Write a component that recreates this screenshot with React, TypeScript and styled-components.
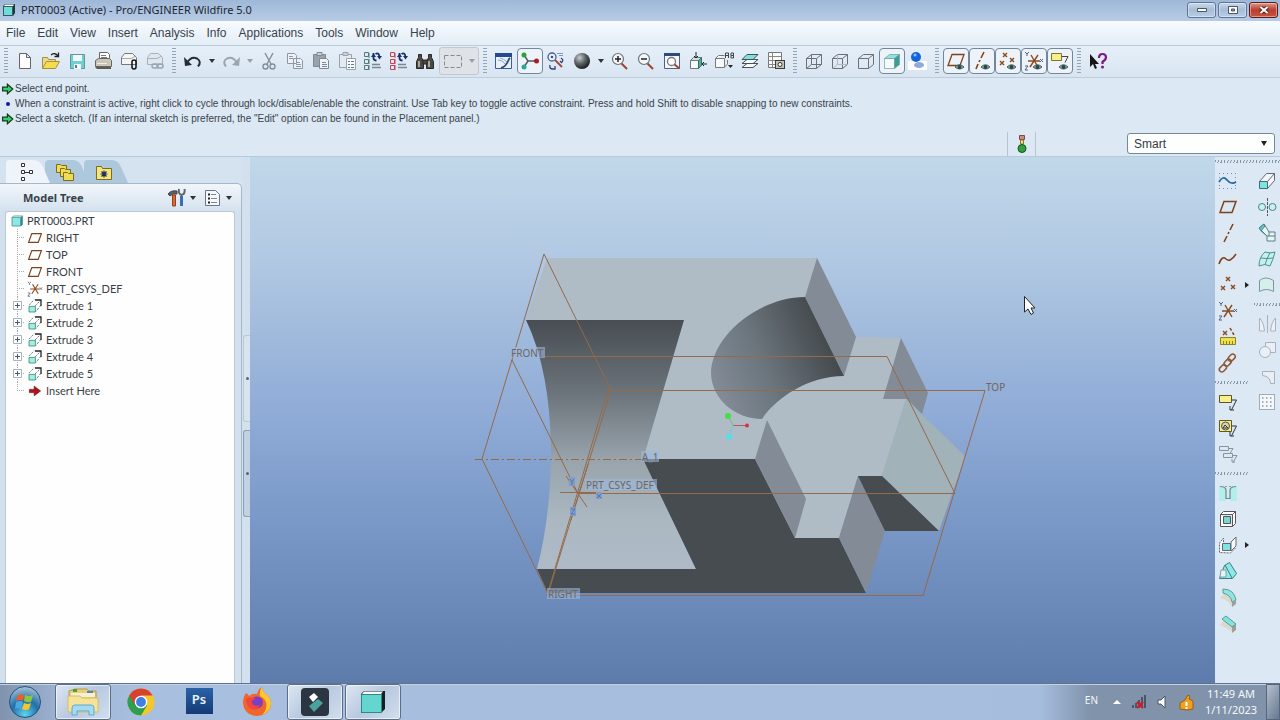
import React, { ReactNode } from 'react';
import styled, { createGlobalStyle } from 'styled-components';

const ui = "'Noto Sans', 'Open Sans', sans-serif";
const arial = "'Liberation Sans', Arial, sans-serif";

const Global = createGlobalStyle`
  * { box-sizing: border-box; }
  body { margin: 0; background: #dce8f3; }
  button { margin: 0; padding: 0; border: 0; background: none; font: inherit; color: inherit; }
  svg { display: block; }
  ul { list-style: none; margin: 0; padding: 0; }
`;

/* ---------- icon artwork, all on a 20 x 20 grid ---------- */

const thin = { fill: 'none', strokeWidth: 1 };
const eye = (
  <g>
    <path d="M9 16q4.500-4.500 9 0q-4.500 4-9 0z" fill="#9fb0b4" stroke="#4a5a5e" />
    <circle cx="13.500" cy="16" r="2" fill="#1d4a4a" />
  </g>
);
const lens = (
  <g>
    <path d="M11 12l6 6" stroke="#a04030" strokeWidth="2" />
    <circle cx="8" cy="8" r="5.500" fill="#f4f6f8" stroke="#6b747c" strokeWidth="1.200" />
  </g>
);
const regen = (box: string) => (
  <g>
    <g fill="#dfe9ee" stroke={box}>
      <path d="M1.500 1.500h4v4h-4zM1.500 8.500h4v4h-4zM1.500 14.500h4v4h-4z" />
    </g>
    <path d="M6 14v5M6 2v5M6 8v5" stroke={box} />
    <path d="M10.500 2v5q0 2.500 3 2.500" stroke="#17306e" strokeWidth="1.800" fill="none" />
    <path d="M8 6l2.500-3.500L13 6z" fill="#17306e" />
    <path d="M12.500 3q3.500-2 4 3" stroke="#17306e" strokeWidth="1.800" fill="none" />
    <path d="M14 5h5l-2.500 3.500z" fill="#17306e" />
    <path d="M9 13.500h8M9 16.500h9" stroke="#7a8794" strokeWidth="1.300" />
  </g>
);
const cubeLines = <path d="M2.500 7.500h10v10h-10zM2.500 7.500l5-4h10l-5 4M17.500 3.500v10l-5 4" stroke="#6c7078" {...thin} />;
const cross = (x: number, y: number) => <path d={`M${x - 2} ${y - 2}l4 4M${x + 2} ${y - 2}l-4 4`} stroke="#8a4a20" strokeWidth="1.400" />;
const csys = (
  <g stroke="#8a4a20" strokeWidth="1.400" fill="none">
    <path d="M4 10h12M7 4l7 12M14 4L6 16" />
    <path d="M1 1l2 2 2-2M3 3v2M1 15h3l-3 4h3M16 8l3 3M19 8l-3 3" stroke="#53617e" strokeWidth="1" />
  </g>
);
const plane = <path d="M6 4.500h12l-4 11h-12z" stroke="#7d4420" strokeWidth="1.500" fill="none" />;

const art: Record<string, ReactNode> = {
  new: <path d="M4.500 2.500h7l4 4v11h-11zM11.500 2.500v4h4" fill="#fdfdfd" stroke="#666" />,
  open: (
    <g>
      <path d="M1.500 17.500v-11h5l1 2h7v3" fill="#e9d98c" stroke="#a8903a" />
      <path d="M1.500 17.500l4-7h13l-4 7z" fill="#f6dc50" stroke="#a8903a" />
      <path d="M10 4q4-3 7 1M17.500 1.500v4h-4" fill="none" stroke="#222" strokeWidth="1.300" />
    </g>
  ),
  save: (
    <g>
      <path d="M3.500 3.500h14v14h-14z" fill="#6fd0cd" stroke="#5a9a9e" />
      <path d="M6 4h9v6H6zM7 13h7v5H7z" fill="#f2f8fa" />
      <path d="M8 14h2v3H8z" fill="#44868c" />
    </g>
  ),
  print: (
    <g>
      <path d="M6.500 9V1.500h8l2 2V9" fill="#fff" stroke="#666" />
      <path d="M8 4.500h5M8 6.500h6" stroke="#777" />
      <path d="M2.500 9.500l3-2h11l2 2v6h-16z" fill="#c9c5bb" stroke="#6b675f" />
      <path d="M2 16h16v2H4z" fill="#5d5953" />
      <path d="M4 12.500h10" stroke="#f5f0da" />
    </g>
  ),
  mail: (
    <g>
      <path d="M2.500 13.500v-7l3-4h8l4 4v7z" fill="#f5f5f5" stroke="#777" />
      <path d="M3 7.500h9l4-2" stroke="#aaa" {...thin} />
      <rect x="13" y="9" width="4" height="9" rx="2" fill="none" stroke="#111" strokeWidth="1.500" />
    </g>
  ),
  mailLink: (
    <g opacity=".7">
      <path d="M2.500 13.500v-7l3-4h8l4 4v7z" fill="#dfe6ec" stroke="#8d98a4" />
      <path d="M3 7.500h9l4-2" stroke="#8d98a4" {...thin} />
      <rect x="7" y="13" width="6" height="4" rx="2" fill="none" stroke="#7d8894" strokeWidth="1.500" />
      <rect x="12" y="13" width="6" height="4" rx="2" fill="none" stroke="#7d8894" strokeWidth="1.500" />
    </g>
  ),
  undo: <g><path d="M4 12q4-7 10-4.500q5 3 1 8" fill="none" stroke="#252c38" strokeWidth="2" /><path d="M1 6l1 9 7-1z" fill="#252c38" /></g>,
  redo: <g><path d="M16 12q-4-7-10-4.500q-5 3-1 8" fill="none" stroke="#9aa5b1" strokeWidth="2" /><path d="M19 6l-1 9-7-1z" fill="#9aa5b1" /></g>,
  cut: <g stroke="#848f9b" fill="none" strokeWidth="1.400"><path d="M6 2l6 11M14 2L8 13" /><circle cx="6.500" cy="15.500" r="2.500" /><circle cx="13.500" cy="15.500" r="2.500" /></g>,
  copy: <g fill="#eef2f6" stroke="#8d98a4"><path d="M2.500 2.500h7l2 2v8h-9zM8.500 7.500h7l2 2v8h-9z" /><path d="M4 5.500h4M4 7.500h4M11 11.500h4M11 13.500h5M11 15.500h5" /></g>,
  paste: <g stroke="#7e8995"><path d="M2.500 3.500h12v12h-12z" fill="#98a2ad" /><path d="M6 1.500h5v3H6z" fill="#c9d0d6" /><path d="M8.500 7.500h7l2 2v8h-9z" fill="#eef2f6" /><path d="M11 11.500h4M11 13.500h5M11 15.500h5" /></g>,
  pasteSpecial: <g stroke="#98a3ae"><path d="M2.500 3.500h12v13h-12z" fill="#e4eaf0" /><path d="M6 1.500h5v3H6z" fill="#c9d0d6" /><path d="M9.500 7.500h9v11h-9z" fill="#f7f9fb" /><path d="M11 10.500h2M14 10.500h3M11 13.500h2M14 13.500h3M11 16.500h2M14 16.500h3" stroke="#5f7895" /></g>,
  regen: regen('#4f7c80'),
  regenRed: regen('#c04455'),
  find: (
    <g fill="#4c4a44" stroke="#2b2925">
      <path d="M1.500 17.500v-7l2-4v-3h3v3l2 4v7zM18.500 17.500v-7l-2-4v-3h-3v3l-2 4v7z" />
      <path d="M8 9h4v4H8z" />
      <path d="M4 10v6M14 10v6" stroke="#c8c4b8" strokeWidth="1.500" />
    </g>
  ),
  dashed: <path d="M1.500 4.500h17v12h-17z" fill="none" stroke="#8a8a8a" strokeDasharray="4 2" />,
  repaint: <g><path d="M1.500 2.500h16v15h-16z" fill="#e8f1fb" stroke="#3b5f98" /><path d="M1 2h17v4H1z" fill="#234a90" /><path d="M7 17q5-1 8-9l1-1" stroke="#33486c" fill="none" strokeWidth="1.800" /><path d="M4 9q5 0 7 4M6 7q4 1 7 4" stroke="#8aa6cc" fill="none" /></g>,
  spin: <g><path d="M4 4l4 6h9M8 10l-4 6" stroke="#556" fill="none" strokeWidth="1.500" /><circle cx="4" cy="4" r="2.500" fill="#2fa036" /><circle cx="4" cy="16" r="2.500" fill="#26a89a" /><circle cx="16.500" cy="10" r="2.500" fill="#b01825" /></g>,
  orient: (
    <g>
      <path d="M9 9l7 7" stroke="#a5433c" strokeWidth="1.800" />
      <circle cx="6" cy="6" r="4" fill="#eef3fa" stroke="#4a5f90" strokeWidth="1.300" />
      <circle cx="6" cy="6" r="1.300" fill="#34508c" />
      <path d="M11 2.500h6M13 4.500h4" stroke="#7f99c4" />
      <path d="M15 7q3 2 1 4M14 10l2 2M4 14q-1 4 3 4M9 15v3h-3" stroke="#2d4274" fill="none" strokeWidth="1.300" />
    </g>
  ),
  shade: <circle cx="10" cy="10" r="8" fill="url(#ball)" />,
  zoomIn: <g>{lens}<path d="M5 8h6M8 5v6" stroke="#222" strokeWidth="1.500" /></g>,
  zoomOut: <g>{lens}<path d="M5 8h6" stroke="#222" strokeWidth="1.500" /></g>,
  fit: <g><path d="M2.500 2.500h15v15h-15z" fill="#f2f5f9" stroke="#4d6288" /><path d="M2 2h16v3H2z" fill="#2a4a80" /><circle cx="9.500" cy="10.500" r="4" fill="#fff" stroke="#777" strokeWidth="1.300" /><path d="M12.500 13.500l5 4" stroke="#a04030" strokeWidth="2" /></g>,
  reorient: <g><path d="M2.500 9.500h8v8h-8z" fill="#f8fbfc" stroke="#777" /><path d="M2.500 9.500l3-3h8l-3 3z" fill="#bfeadf" stroke="#777" /><path d="M10.500 17.500l3-3v-8l-3 3z" fill="#4fae9c" stroke="#3c6c64" /><path d="M8 1v6M6 5l2 2 2-2M19 13h-5M16 11l-2 2 2 2" stroke="#222" fill="none" /></g>,
  views: (
    <g>
      <path d="M1.500 7.500h9v9h-9zM1.500 7.500l3-3h6M13.500 9v4l-3 3" fill="#f8fbfc" stroke="#777" />
      <path d="M11.500 7V2h3v5M12 4.500h3M17 2h2.500v5H17zM17 4.500h2" stroke="#444" fill="none" />
      <path d="M14 14h5l-2.500 3z" fill="#222" />
    </g>
  ),
  layers: <g stroke="#425058"><path d="M2 16.500l5-4h11l-5 4zM2 12.500l5-4h11l-5 4z" fill="#fafcfd" /><path d="M2 8.500l5-5h11l-5 5z" fill="#7fe0de" /></g>,
  viewMgr: <g><path d="M2.500 1.500h13v15h-13z" fill="#fafaf8" stroke="#777" /><path d="M2 5.500h13M2 9.500h13M2 13.500h13M6.500 2v14" stroke="#888" /><rect x="9.500" y="9.500" width="9" height="8" fill="#c6c2b8" stroke="#3f3c36" /><circle cx="14" cy="13.500" r="2" fill="#fff" stroke="#333" /></g>,
  wire: <g>{cubeLines}<path d="M7.500 3.500v10h10M7.500 13.500l-5 4" stroke="#6c7078" {...thin} /></g>,
  hidden: <g>{cubeLines}<path d="M7.500 3.500v10h10M7.500 13.500l-5 4" stroke="#b2bac4" {...thin} /></g>,
  noHidden: cubeLines,
  shaded: <g stroke="#6f9fa2" strokeWidth=".7"><path d="M2.500 7.500h10v10h-10z" fill="#f3fbfb" /><path d="M2.500 7.500l5-4h10l-5 4z" fill="#8fe3df" /><path d="M17.500 3.500v10l-5 4v-10z" fill="#3f9a98" /></g>,
  enhanced: <g><path d="M0 10h19v9H0z" fill="#fbfdff" /><ellipse cx="11" cy="14" rx="5" ry="3" fill="#8fa9dc" /><circle cx="8" cy="6" r="5" fill="#1466d8" /><circle cx="7" cy="4" r="1.500" fill="#8cc0ff" /></g>,
  dPlane: <g><path d="M6 3.500h12l-4 11h-12z" stroke="#7d4420" strokeWidth="1.300" fill="none" />{eye}</g>,
  dAxis: <g><path d="M12 1l-3 6M8 9l-1 2M6 13l-2 5" stroke="#7d4420" strokeWidth="1.600" />{eye}</g>,
  dPoint: <g>{cross(7, 4)}{cross(4, 12)}{cross(14, 9)}{eye}</g>,
  dCsys: <g>{csys}{eye}</g>,
  dNote: <g><path d="M1.500 2.500h10v7h-10z" fill="#f7f08a" stroke="#7c7530" /><path d="M12 5.500h6l-3 6" fill="none" stroke="#444" />{eye}</g>,
  help: <g><path d="M2 3v13l3-3 2 5 2-1-2-4h4z" fill="#151515" /><path d="M11 7q0-4 3.500-4t3.500 3.500q0 2-3.500 4.500v2" fill="none" stroke="#7b1a80" strokeWidth="2.200" /><circle cx="14.500" cy="16" r="1.500" fill="#7b1a80" /></g>,

  sketch: <g><path d="M1 2.500h17M1 17.500h17M1.500 2v16M17.500 2v16" stroke="#6e8fc0" strokeDasharray="1 3" /><path d="M1 11q4-7 8-2t9 2" fill="none" stroke="#23689e" strokeWidth="1.800" /></g>,
  plane,
  axis: <path d="M15 1l-3 6M11 9l-1 2M9 13l-3 6" stroke="#7d4420" strokeWidth="1.600" />,
  curve: <path d="M1 15q3-9 7-5t10-5" fill="none" stroke="#7d4420" strokeWidth="1.600" />,
  points: <g>{cross(10, 4)}{cross(5, 13)}{cross(15, 12)}</g>,
  csys,
  analysis: <g>{cross(7, 6)}<path d="M12 1l4 7" stroke="#7d4420" strokeDasharray="3 2" strokeWidth="1.500" /><path d="M2.500 10.500h15v7h-15z" fill="#efe04e" stroke="#8d8224" /><path d="M5.500 14v3M8.500 14v3M11.500 14v3M14.500 14v3" stroke="#8d8224" /></g>,
  chain: <g fill="none" stroke="#8a5636" strokeWidth="1.500"><rect x="10" y="2" width="8" height="5" rx="2.500" transform="rotate(-45 14 5)" /><rect x="6" y="7" width="8" height="5" rx="2.500" transform="rotate(-45 10 10)" /><rect x="1" y="12" width="8" height="5" rx="2.500" transform="rotate(-45 6 15)" /></g>,
  note: <g><path d="M1.500 3.500h12v7h-12z" fill="#f7f08a" stroke="#5c5530" /><path d="M14 8h4.500l-5 10M12 14v4h4" fill="none" stroke="#333" /></g>,
  noteSketch: <g><path d="M1.500 2.500h12v11h-12z" fill="#f7f08a" stroke="#5c5530" /><circle cx="7.500" cy="8" r="4" fill="#ddd8a0" stroke="#555" /><path d="M5 10l2-3 3 3zM14 8h4.500l-5 10M12 14v4h4" fill="none" stroke="#333" /></g>,
  notes: <g fill="none" stroke="#8a949e"><path d="M1.500 2.500h9v4h-9zM5.500 9.500h9v4h-9z" /><path d="M11 4.500h4l-3 5M15 11.500h4l-4 7M14 15v3h3" /></g>,
  hole: <g><path d="M1 3h5l2 3v12H1zM19 3h-5l-2 3v12h7z" fill="#b4eeeb" /><path d="M2 3.500q6 0 6 4v8h4v-8q0-4 6-4" fill="none" stroke="#5f8c94" strokeWidth="1.200" /><path d="M3 3.500h14" stroke="#7f9fb0" strokeDasharray="2 2" /></g>,
  shell: <g fill="#fff" stroke="#5a5458"><path d="M2.500 5.500l3-3h12v12l-3 3h-12zM14.500 17.500v-12h-12M14.500 5.500l3-3" /><path d="M5.500 7.500h7v7h-7z" fill="#76d8d2" /></g>,
  rib: <g stroke="#667"><path d="M1.500 17.500V8l4-5v9h7l5-5v6l-5 5z" fill="#f8fbfc" strokeDasharray="2 1" /><path d="M4.500 8.500h8v7h-8z" fill="#7fe3df" /><path d="M13 16V7l5-5v9z" fill="#f8fbfc" /></g>,
  draft: <g stroke="#3f7c88"><path d="M1.500 17.500l5-13 5-3 7 11-4 5z" fill="#8de9e4" /><path d="M3 9h5v7H2z" fill="#e6f4f4" stroke="#7fa3a8" /><path d="M7 4l7 13" /></g>,
  round: <g><path d="M2 11l5-5q6 0 9 8v4l-3 1q-2-6-11-8z" fill="#dcd8cc" /><path d="M5 2q11 0 13 11l-4 2Q13 8 5 6z" fill="#8fe6e0" stroke="#5f9a9c" /><path d="M14 15l4-2v4l-4 3z" fill="#a39e94" /></g>,
  chamfer: <g><path d="M2 12l5-6 8 7v6l-5-3z" fill="#dcd8cc" /><path d="M14 12l4-1v6l-4 3z" fill="#a39e94" /><path d="M4 6l4-3 10 8-4 3z" fill="#7fe3df" stroke="#5f9a9c" /></g>,

  extrude: <g><path d="M2.500 10.500l7-8h8v7l-7 8z" fill="#f3f6f8" stroke="#667" /><path d="M2.500 10.500h8v7h-8z" fill="#7fe3df" stroke="#3f6e78" /><path d="M10.500 10.500l7-8" stroke="#667" /></g>,
  revolve: <g><path d="M10.500 1v18" stroke="#555" strokeDasharray="3 1" /><circle cx="5" cy="10" r="3.500" fill="#c7f2f0" stroke="#4c8490" /><circle cx="15.500" cy="10" r="3.500" fill="#c7f2f0" stroke="#4c8490" /></g>,
  sweep: <g stroke="#58808a"><path d="M2 5l5-4 5 8h6v9h-8v-5z" fill="#e6f5f4" /><path d="M2 5l5-4 1 2-4 5z" fill="#5cc9c4" /><path d="M4 8l6 5h8M12 9v4" fill="none" /></g>,
  blend: <g stroke="#4d8f92"><path d="M2 17q0-9 6-14q5 2 10 0q-2 8-5 14q-5-3-11 0z" fill="#c4f1ee" /><path d="M13 3.500q-3 6-5 12M4 9q6 1 12 0" fill="none" /></g>,
  style: <path d="M2.500 16.500v-11q6-5 14 0v11q-7-4-14 0z" fill="#d5efec" stroke="#7d979c" />,
  mirror: <g stroke="#a8b2bc" fill="#eef2f6"><path d="M2.500 4v13h5q-1-9-5-13zM18.500 4v13h-5q1-9 5-13z" /><path d="M10.500 1v18" /></g>,
  merge: <g stroke="#a8b2bc" fill="#e9eff4"><path d="M8.500 2.500h10v10h-10z" /><circle cx="8" cy="12" r="5.500" /></g>,
  trim: <path d="M5.500 5.500h12v12h-4q0-7-8-8z" stroke="#a8b2bc" fill="#e9eff4" />,
  pattern: <g><rect x="2.500" y="2.500" width="15" height="15" fill="#f4f8fb" stroke="#a0acb8" /><path d="M5 6h11M5 10h11M5 14h11" stroke="#8797a8" strokeDasharray="1.500 2.500" strokeWidth="1.500" /></g>,

  treeTab: <g fill="#fff" stroke="#333"><path d="M5.500 1.500h3v3h-3zM5.500 8.500h3v3h-3zM5.500 15.500h3v3h-3zM13.500 8.500h3v3h-3z" /><path d="M9 10.500h4" /></g>,
  folders: <g fill="#f1dc55" stroke="#7c6c1c"><path d="M1.500 2.500h4l1 1h5v7h-10z" /><path d="M5.500 6.500h4l1 1h5v7h-10z" /><path d="M8.500 10.500h4l1 1h5v7h-10z" /></g>,
  fav: <g><path d="M2.500 4.500h5l1 2h9v11h-15z" fill="#f4e67c" stroke="#7c6c1c" /><path d="M10 8.500v7M6.500 12h7M7.500 9.500l5 5M12.500 9.500l-5 5" stroke="#1c2a5c" strokeWidth="1.200" /></g>,
  tools: <g><path d="M1 6q3-4 9-3v3L6 6 3 8z" fill="#5c6267" stroke="#444" /><path d="M5.500 7h3v11h-3z" fill="#d96b35" stroke="#96411c" /><path d="M14.500 8v10" stroke="#3b6db5" strokeWidth="3" /><path d="M12 1q-1 5 2.500 6q4-1 3-6" fill="none" stroke="#5f666c" strokeWidth="2" /></g>,
  settings: <g><path d="M2.500 2.500h10l4 4v11h-14z" fill="#f6f8fb" stroke="#6a7686" /><path d="M5 6.500h2M5 10.500h2M5 14.500h2" stroke="#222" strokeWidth="2" /><path d="M8 6.500h5M8 10.500h6M8 14.500h6" stroke="#7a889a" /></g>,
  part: <g stroke="#3c8f92" strokeWidth=".8"><path d="M3 5l2-2h13v12l-2 2H3z" fill="#3d8488" /><path d="M3 5h12v12H3z" fill="#8be8e4" /><path d="M3 5l2-2h13l-3 2z" fill="#e2fbfa" /></g>,
  insert: <path d="M3 8h6V4l8 6-8 6v-4H3z" fill="#b41219" stroke="#5b0c10" strokeWidth=".8" />,
  extrudeFeat: <g><path d="M2.500 9L9 2M10 10l7-7M17.500 9L11 17" fill="none" stroke="#3f6c60" strokeDasharray="3 1.500" /><path d="M10 2.500h7.500V10" fill="none" stroke="#222" strokeWidth="1.600" /><path d="M2.500 10.500h8v7h-8z" fill="#9ff0dc" stroke="#3a8678" /></g>,
  arrow: <path d="M1 7h8V2l9 8-9 8v-5H1z" fill="#35d06a" stroke="#113a1c" strokeWidth="2" />,
};

const Icon = ({ name, size = 20 }: { name: string; size?: number }) => (
  <svg width={size} height={size} viewBox="0 0 20 20" aria-hidden="true">{art[name]}</svg>
);

/* ---------- frame ---------- */

const Page = styled.div`
  min-height: 100vh;
  display: flex;
  flex-direction: column;
  background: #dce8f3;
  color: #39424b;
  font: 12px/16px ${arial};
`;
const TitleBar = styled.header`
  height: 21px;
  display: flex;
  align-items: center;
  padding: 0 2px 2px;
  gap: 5px;
  background: linear-gradient(#9fb8d8, #b7cbe5);
  font: 11px/16px ${ui};
  color: #1d2733;
`;
const Title = styled.h1`
  margin: 0;
  flex: 1;
  font: inherit;
`;
const WinButtons = styled.div`
  display: flex;
  gap: 2px;
`;
const WinButton = styled.button<{ $close?: boolean }>`
  width: 29px;
  height: 16px;
  display: grid;
  place-items: center;
  border: 1px solid ${p => (p.$close ? '#5c1c1c' : '#5f7593')};
  border-radius: 3px;
  background: ${p => (p.$close ? 'linear-gradient(#d99a8e, #bb3f2c 50%, #c8543f)' : 'linear-gradient(#c9d8ea, #a5bcd8 50%, #bccee5)')};
  box-shadow: inset 0 0 0 1px rgba(255, 255, 255, 0.4);
`;
const MenuBar = styled.nav`
  height: 24px;
  display: flex;
  align-items: center;
  gap: 12px;
  padding: 0 6px;
  background: linear-gradient(#f7fbfe, #e3edf6);
`;
const MenuItem = styled.button`
  line-height: 16px;
`;
const ToolBar = styled.div`
  height: 33px;
  display: flex;
  align-items: center;
  padding-bottom: 1px;
  border-top: 1px solid #b9cbda;
  border-bottom: 1px solid #bccddb;
  background: linear-gradient(#e6eff8, #d8e5f1);
  overflow: hidden;
`;
const Grip = styled.span`
  width: 4px;
  height: 26px;
  margin: 0 4px;
  flex: none;
  background: repeating-linear-gradient(#93a6b8 0 1px, transparent 1px 3px);
`;
const Group = styled.div`
  display: flex;
  align-items: center;
`;
const Tool = styled.button<{ $on?: boolean }>`
  width: 26px;
  height: 26px;
  flex: none;
  display: grid;
  place-items: center;
  border-radius: 4px;
  border: 1px solid ${p => (p.$on ? '#71879d' : 'transparent')};
  background: ${p => (p.$on ? '#edf3f8' : 'transparent')};
`;
const CaretButton = styled.button<{ $dim?: boolean }>`
  width: 12px;
  height: 26px;
  display: grid;
  place-items: center;
  color: ${p => (p.$dim ? '#93a0ad' : '#2c333b')};
  &::before {
    content: '';
    border: 3px solid transparent;
    border-top: 4px solid currentColor;
    border-bottom: 0;
  }
`;
const SelectBox = styled.div`
  display: flex;
  margin-left: 1px;
  border: 1px solid #c4c8ce;
  border-radius: 3px;
  background: #dfe2e6;
`;

/* ---------- messages ---------- */

const Messages = styled.section`
  padding: 3px 0 0 2px;
  font: 10px/15px ${arial};
`;
const Message = styled.p`
  margin: 0;
  display: flex;
  align-items: center;
  gap: 1px;
`;
const Bullet = styled.span`
  width: 4px;
  height: 4px;
  margin: 0 4px;
  border-radius: 50%;
  background: #0f1f96;
`;
const StatusRow = styled.div`
  height: 31px;
  display: flex;
  align-items: center;
  justify-content: flex-end;
  padding: 5px 5px 0 0;
  border-bottom: 1px solid #b4ccda;
`;
const Light = styled.div`
  width: 29px;
  height: 24px;
  margin-right: 91px;
  display: grid;
  place-items: center;
  border: solid #b9c3cd;
  border-width: 0 1px;
`;
const Filter = styled.label`
  position: relative;
  &::after {
    content: '';
    position: absolute;
    right: 8px;
    top: 8px;
    border: 3px solid transparent;
    border-top: 5px solid #222;
    border-bottom: 0;
    pointer-events: none;
  }
`;
const FilterSelect = styled.select`
  width: 148px;
  height: 21px;
  padding: 0 6px;
  display: block;
  appearance: none;
  border: 1px solid #74889c;
  border-radius: 3px;
  background: #fdfefe;
  color: #333a42;
  font: 12px/16px ${arial};
`;

/* ---------- main area ---------- */

const Main = styled.main`
  flex: 1;
  display: flex;
  min-height: 520px;
`;
const Side = styled.aside`
  width: 250px;
  flex: none;
  display: flex;
  font: 11px/17px Lato, ${ui};
`;
const SideBody = styled.div`
  width: 242px;
  display: flex;
  flex-direction: column;
`;
const Tabs = styled.div`
  height: 26px;
  display: flex;
  align-items: flex-end;
  padding-left: 6px;
  background: #d5e3f0;
`;
const Tab = styled.button<{ $z: number }>`
  position: relative;
  z-index: ${p => p.$z};
  width: 39px;
  height: 23px;
  display: grid;
  place-items: center;
`;
const TabShape = styled.svg`
  position: absolute;
  left: 0;
  top: 0;
  z-index: -1;
`;
const Panel = styled.div`
  flex: 1;
  display: flex;
  flex-direction: column;
  padding: 0 6px 0 5px;
  border: solid #a5b7c8;
  border-width: 1px 1px 0 0;
  border-radius: 0 5px 0 0;
  background: linear-gradient(#f2f6fa, #d3e1ee 28px);
`;
const PanelHead = styled.div`
  height: 27px;
  display: flex;
  align-items: center;
  padding-left: 18px;
`;
const HeadButton = styled.button`
  width: 20px;
  height: 20px;
  margin-left: 4px;
`;
const PanelTitle = styled.h2`
  margin: 0;
  flex: 1;
  font: bold 11px/16px ${ui};
`;
const TreeBox = styled.div`
  flex: 1;
  padding: 0 4px;
  border: 1px solid #b9c9d6;
  border-bottom: 0;
  border-radius: 3px 3px 0 0;
  background: #fefefe;
`;
const Row = styled.li`
  height: 17px;
  display: flex;
  align-items: center;
  gap: 3px;
  color: #3a3f45;
`;
const Branch = styled.svg`
  flex: none;
`;
const Sash = styled.div`
  width: 8px;
  flex: 1;
  padding-top: 178px;
  display: flex;
  flex-direction: column;
  align-items: flex-end;
  gap: 8px;
  background: #d3e1ee;
`;
const Handle = styled.button<{ $deep?: boolean }>`
  width: 7px;
  height: 87px;
  display: grid;
  place-items: center;
  border: 1px solid ${p => (p.$deep ? '#8ca0b6' : '#bccad8')};
  border-right: 0;
  border-radius: 3px 0 0 3px;
  background: ${p => (p.$deep ? '#c2d2e3' : '#d7e4f0')};
  &::before {
    content: '';
    width: 3px;
    height: 3px;
    border-radius: 50%;
    background: #5c6470;
  }
`;
const Viewport = styled.section`
  flex: 1;
  min-width: 0;
  position: relative;
  background: linear-gradient(#c1d8ea, #b0c8e2 20%, #8eaad6 50%, #7796c5 72%, #5d7bab);
`;
const Scene = styled.svg`
  position: absolute;
  inset: 0;
  width: 100%;
  height: 100%;
`;
const Palette = styled.aside`
  width: 65px;
  flex: none;
  padding-top: 3px;
  background: #dce8f3;
`;
const WideGrip = styled.div`
  height: 3px;
  background: repeating-linear-gradient(110deg, #8296aa 0 1px, transparent 1px 3px);
`;
const Columns = styled.div`
  display: flex;
  justify-content: space-between;
`;
const Column = styled.div`
  display: flex;
  flex-direction: column;
`;
const Stack = styled.div`
  padding: 5px 0;
`;
const PaletteCell = styled.div`
  display: flex;
  align-items: center;
`;
const Fly = styled.span`
  margin-left: 4px;
  border: 3px solid transparent;
  border-left: 4px solid #222;
  border-right: 0;
`;

/* ---------- taskbar ---------- */

const TaskBar = styled.footer`
  height: 37px;
  display: flex;
  align-items: center;
  border-top: 1px solid #5d7390;
  background: linear-gradient(90deg, #7f93ae, #9db3d2 60px, #a9bfdf 140px, #a6bddd calc(100% - 240px), #8093ab calc(100% - 190px), #8093ab);
  box-shadow: inset 0 1px 0 #c3d1e3;
`;
const Start = styled.button`
  width: 50px;
  display: grid;
  place-items: center;
  margin-right: 3px;
`;
const Task = styled.button<{ $open?: boolean }>`
  width: 56px;
  height: 36px;
  margin-left: 2px;
  display: grid;
  place-items: center;
  border: 1px solid ${p => (p.$open ? '#5d6f88' : 'transparent')};
  border-radius: 3px;
  background: ${p => (p.$open ? 'linear-gradient(135deg, #dde7f3, #b7c8e0 50%, #d3dfee)' : 'none')};
  box-shadow: ${p => (p.$open ? 'inset 0 0 0 1px rgba(255,255,255,.6)' : 'none')};
`;
const PsTile = styled.span`
  width: 27px;
  height: 26px;
  margin-bottom: 3px;
  background: linear-gradient(#2b62a8, #143a74);
  color: #eaf3fd;
  font: 600 13px/23px ${ui};
  text-align: center;
`;
const Tray = styled.div`
  flex: 1;
  height: 100%;
  display: flex;
  align-items: center;
  justify-content: flex-end;
  gap: 8px;
  color: #f4f7fb;
  font: 11px/16px ${ui};
`;
const Lang = styled.button`
  margin: 0 6px 4px 0;
  font-size: 10px;
`;
const Clock = styled.div`
  width: 54px;
  text-align: center;
  white-space: nowrap;
`;
const ShowDesktop = styled.button`
  width: 14px;
  height: 36px;
  border: 1px solid #56667c;
  background: linear-gradient(120deg, #b5c0ce, #66778e);
`;

const menus = ['File', 'Edit', 'View', 'Insert', 'Analysis', 'Info', 'Applications', 'Tools', 'Window', 'Help'];

const Tools = ({ names, on = [] }: { names: string[]; on?: string[] }) => (
  <>
    {names.map(n => (
      <Tool key={n} aria-label={n} $on={on.includes(n)}><Icon name={n} /></Tool>
    ))}
  </>
);

const PaletteStack = ({ names, fly = [] }: { names: string[]; fly?: string[] }) => (
  <Stack>
    {names.map(n => (
      <PaletteCell key={n}>
        <Tool aria-label={n}><Icon name={n} /></Tool>
        {fly.includes(n) && <Fly />}
      </PaletteCell>
    ))}
  </Stack>
);

const nodes = [
  { label: 'RIGHT', icon: 'plane' },
  { label: 'TOP', icon: 'plane' },
  { label: 'FRONT', icon: 'plane' },
  { label: 'PRT_CSYS_DEF', icon: 'csys' },
  ...[1, 2, 3, 4, 5].map(n => ({ label: `Extrude ${n}`, icon: 'extrudeFeat' })),
  { label: 'Insert Here', icon: 'insert' },
];

const tabFill = ['#eef4f9', '#adc8dc', '#adc8dc'];

const Tag = ({ x, y, w, children }: { x: number; y: number; w: number; children: string }) => (
  <g>
    <rect x={x - 1} y={y - 10} width={w} height="11" fill="#9db7dc" opacity=".6" />
    <text x={x} y={y}>{children}</text>
  </g>
);

const Model = () => (
  <Scene viewBox="250 157 965 526" preserveAspectRatio="xMidYMid meet" role="img" aria-label="Part model">
    <defs>
      <linearGradient id="saddle" gradientUnits="userSpaceOnUse" x1="0" y1="320" x2="0" y2="569">
        <stop offset="0" stopColor="#474d52" />
        <stop offset=".3" stopColor="#6d757c" />
        <stop offset=".56" stopColor="#98a3ab" />
        <stop offset=".8" stopColor="#abb8c1" />
        <stop offset="1" stopColor="#aebac7" />
      </linearGradient>
      <linearGradient id="bore" gradientUnits="userSpaceOnUse" x1="715" y1="385" x2="832" y2="335">
        <stop offset="0" stopColor="#828b96" />
        <stop offset=".4" stopColor="#6c767e" />
        <stop offset="1" stopColor="#414649" />
      </linearGradient>
    </defs>
    <path d="M547 258H817L856 337L901 338L883 399H906L882 476H858L839 538H795L755 459H643L684 320H526Z" fill="#afbcc5" />
    <path d="M526 320H684L643 459L696 569H537Q551 515 551 450Q550 370 526 320Z" fill="url(#saddle)" />
    <path d="M643 459H755L795 538H839L866 593H548L537 569H696Z" fill="#474c50" />
    <g fill="#838b96">
      <path d="M817 258L856 337L844 376L805 297Z" />
      <path d="M901 338L928 393L922 414L907 399H883Z" />
      <path d="M767 420L806 499L795 538L755 459Z" />
      <path d="M858 476L885 531L866 593L839 538Z" />
    </g>
    <path d="M906 399L965 456L939 531L882 476Z" fill="#a2b2b9" />
    <path d="M858 476H882L939 531H885Z" fill="#474c50" />
    <path d="M805 297C760 297 711 335 711 374C712 399 735 419 762 419C776 398 808 376 844 376Z" fill="url(#bore)" />
    <g fill="none" stroke="#946a4a">
      <path d="M544 254L611 390L548 594L482 459Z" />
      <path d="M545 356.500H887L955 493.500H578L512 360" />
      <path d="M608 390.500H985L923 595.500H547L608 390" />
      <path d="M475 459.500H643" strokeDasharray="8 3 2 3" />
      <path d="M560 492.500H600M566 476L587 507M588 464L571 520" />
    </g>
    <g fill="#7f9ccc">
      <path d="M569 477h6v9h-6zM596 492h6v7h-6zM570 507h6v9h-6z" />
    </g>
    <g fill="none" stroke="#5878a8">
      <path d="M570 479l2 3 2-3M572 482v3M597 494l4 4M601 494l-4 4M571 509h4l-4 5h4" />
    </g>
    <g fontFamily="'Noto Sans', sans-serif" fontSize="10" fill="#6e675f">
      <Tag x={511} y={357} w={35}>FRONT</Tag>
      <Tag x={586} y={489} w={72}>PRT_CSYS_DEF</Tag>
      <Tag x={642} y={461} w={18}>A_1</Tag>
      <Tag x={548} y={598} w={33}>RIGHT</Tag>
      <text x="986" y="391">TOP</text>
    </g>
    <path d="M728 416L733 425" stroke="#5fc86a" />
    <path d="M733 425.500H747" stroke="#c8505a" />
    <path d="M733 425L729 437" stroke="#63cfd8" />
    <circle cx="728" cy="416" r="3" fill="#43e03f" />
    <circle cx="747" cy="425.500" r="2" fill="#cf3644" />
    <circle cx="729" cy="437" r="3" fill="#55dfe6" />
    <path d="M1024.500 296.500V312L1028 309L1031 314.500L1033.500 313L1031 308H1035Z" fill="#fff" stroke="#20252c" />
  </Scene>
);

export default function App() {
  return (
    <Page>
      <Global />
      <TitleBar>
        <svg width="14" height="14" viewBox="0 0 14 14" aria-hidden="true">
          <defs>
            <radialGradient id="ball" cx=".35" cy=".3" r=".7">
              <stop offset="0" stopColor="#c8ced2" />
              <stop offset=".5" stopColor="#62686c" />
              <stop offset="1" stopColor="#1e2124" />
            </radialGradient>
          </defs>
          <path d="M1 3l2-2h10v9l-2 3H1z" fill="#1c3a3c" />
          <path d="M1.500 3.500h9v9h-9z" fill="#6edcd8" stroke="#355c60" />
          <path d="M2 3l1-1.500h9L11 3z" fill="#fff" />
        </svg>
        <Title>PRT0003 (Active) - Pro/ENGINEER Wildfire 5.0</Title>
        <WinButtons>
          <WinButton aria-label="Minimize"><svg width="10" height="6"><path d="M.5 1.500h9v3h-9z" fill="#fff" stroke="#4b5563" /></svg></WinButton>
          <WinButton aria-label="Restore"><svg width="10" height="8"><path d="M.5.5h9v7h-9z" fill="#fff" stroke="#4b5563" /><path d="M3.500 3h3v2h-3z" fill="#8ca0ba" stroke="#4b5563" /></svg></WinButton>
          <WinButton $close aria-label="Close"><svg width="10" height="8"><path d="M1.500 1l7 6M8.500 1l-7 6" stroke="#5a2020" strokeWidth="4" /><path d="M1.500 1l7 6M8.500 1l-7 6" stroke="#fff" strokeWidth="2" /></svg></WinButton>
        </WinButtons>
      </TitleBar>
      <MenuBar>{menus.map(m => <MenuItem key={m}>{m}</MenuItem>)}</MenuBar>
      <ToolBar>
        <Grip />
        <Group><Tools names={['new', 'open', 'save', 'print', 'mail', 'mailLink']} /></Group>
        <Grip />
        <Group>
          <Tools names={['undo']} />
          <CaretButton aria-label="Undo list" />
          <Tools names={['redo']} />
          <CaretButton $dim aria-label="Redo list" />
          <Tools names={['cut', 'copy', 'paste', 'pasteSpecial', 'regen', 'regenRed', 'find']} />
          <SelectBox>
            <Tools names={['dashed']} />
            <CaretButton $dim aria-label="Selection list" />
          </SelectBox>
        </Group>
        <Grip />
        <Group>
          <Tools names={['repaint', 'spin', 'orient', 'shade']} on={['spin']} />
          <CaretButton aria-label="Shading list" />
          <Tools names={['zoomIn', 'zoomOut', 'fit', 'reorient', 'views', 'layers', 'viewMgr']} />
        </Group>
        <Grip />
        <Group><Tools names={['wire', 'hidden', 'noHidden', 'shaded', 'enhanced']} on={['shaded']} /></Group>
        <Grip />
        <Group><Tools names={['dPlane', 'dAxis', 'dPoint', 'dCsys', 'dNote']} on={['dPlane', 'dAxis', 'dPoint', 'dCsys', 'dNote']} /></Group>
        <Grip />
        <Group><Tools names={['help']} /></Group>
      </ToolBar>
      <Messages>
        <Message><Icon name="arrow" size={12} />Select end point.</Message>
        <Message><Bullet />When a constraint is active, right click to cycle through lock/disable/enable the constraint. Use Tab key to toggle active constraint. Press and hold Shift to disable snapping to new constraints.</Message>
        <Message><Icon name="arrow" size={12} />Select a sketch. (If an internal sketch is preferred, the "Edit" option can be found in the Placement panel.)</Message>
      </Messages>
      <StatusRow>
        <Light>
          <svg width="10" height="20" viewBox="0 0 10 20" aria-hidden="true">
            <path d="M2.500 1.500h5v4h-5z" fill="#c98c84" stroke="#7e4a44" />
            <path d="M3.500 6h3v4h-3z" fill="#f1e08a" stroke="#8d7a34" />
            <circle cx="5" cy="14.500" r="4" fill="#2fa23c" stroke="#145020" />
          </svg>
        </Light>
        <Filter>
          <FilterSelect aria-label="Selection filter" defaultValue="Smart"><option>Smart</option></FilterSelect>
        </Filter>
      </StatusRow>
      <Main>
        <Side>
          <SideBody>
            <Tabs>
              {['treeTab', 'folders', 'fav'].map((t, i) => (
                <Tab key={t} $z={3 - i} aria-label={t}>
                  <TabShape width="46" height="23" aria-hidden="true">
                    <path d="M0 23V4Q0 0 4 0H28Q34 0 37 7L44 23Z" fill={tabFill[i]} />
                  </TabShape>
                  <Icon name={t} />
                </Tab>
              ))}
            </Tabs>
            <Panel>
              <PanelHead>
                <PanelTitle>Model Tree</PanelTitle>
                <HeadButton aria-label="Show"><Icon name="tools" /></HeadButton>
                <CaretButton aria-label="Show list" />
                <HeadButton aria-label="Settings"><Icon name="settings" /></HeadButton>
                <CaretButton aria-label="Settings list" />
              </PanelHead>
              <TreeBox>
                <ul>
                  <Row><Icon name="part" size={14} />PRT0003.PRT</Row>
                  {nodes.map((n, i) => (
                    <Row key={n.label}>
                      <Branch width="14" height="17" aria-hidden="true">
                        <path d={`M7.500 0V${i === nodes.length - 1 ? 8 : 17}M7 8.500H14`} stroke="#a9a9a9" strokeDasharray="1 1" />
                        {n.icon === 'extrudeFeat' && (
                          <g stroke="#a3b3c1">
                            <path d="M3.500 4.500h8v8h-8z" fill="#fff" />
                            <path d="M5 8.500h5M7.500 6v5" stroke="#4c5a68" />
                          </g>
                        )}
                      </Branch>
                      <Icon name={n.icon} size={16} />
                      {n.label}
                    </Row>
                  ))}
                </ul>
              </TreeBox>
            </Panel>
          </SideBody>
          <Sash>
            <Handle aria-label="Collapse tree" />
            <Handle $deep aria-label="Collapse browser" />
          </Sash>
        </Side>
        <Viewport><Model /></Viewport>
        <Palette>
          <WideGrip />
          <Columns>
            <Column>
              <PaletteStack names={['sketch', 'plane', 'axis', 'curve', 'points', 'csys', 'analysis', 'chain']} fly={['points']} />
              <WideGrip />
              <PaletteStack names={['note', 'noteSketch', 'notes']} />
              <WideGrip />
              <PaletteStack names={['hole', 'shell', 'rib', 'draft', 'round', 'chamfer']} fly={['rib']} />
            </Column>
            <Column>
              <PaletteStack names={['extrude', 'revolve', 'sweep', 'blend', 'style']} />
              <WideGrip />
              <PaletteStack names={['mirror', 'merge', 'trim', 'pattern']} />
            </Column>
          </Columns>
        </Palette>
      </Main>
      <TaskBar>
        <Start aria-label="Start">
          <svg width="34" height="34" viewBox="0 0 34 34">
            <defs>
              <radialGradient id="orb" cx=".5" cy=".9" r=".9">
                <stop offset="0" stopColor="#5fd3f0" />
                <stop offset=".5" stopColor="#1f6fa8" />
                <stop offset="1" stopColor="#a9c4da" />
              </radialGradient>
            </defs>
            <circle cx="17" cy="17" r="15.500" fill="url(#orb)" stroke="#2b4f78" />
            <path d="M9 11q4-3 7-1l-1 6q-4-2-7 0z" fill="#e8602c" />
            <path d="M17 10q4 2 8 0l-2 7q-3 1-7-1z" fill="#8fc63e" />
            <path d="M8 17q4-2 7 0l-2 7q-3-2-6 0z" fill="#4ba6e6" />
            <path d="M16 18q4 2 7 0l-2 6q-3 2-7 0z" fill="#f7c62c" />
          </svg>
        </Start>
        <Task $open aria-label="Explorer">
          <svg width="34" height="30" viewBox="0 0 34 30">
            <path d="M3 4l6-2h12l2 2h7v20H3z" fill="#e9cf76" stroke="#b89a45" />
            <path d="M5 6h24v4H5z" fill="#f6efd2" />
            <path d="M7 2h4v3H7z" fill="#4f9d3e" /><path d="M21 4h6v2h-6z" fill="#4a82c4" />
            <path d="M2 9h12l2 2h16v14H2z" fill="#f5e39a" stroke="#d4bc68" />
            <path d="M6 28v-7q0-3 3-3h16q3 0 3 3v7h-5v-4H11v4z" fill="#a4dbf2" stroke="#5fa9d0" />
          </svg>
        </Task>
        <Task aria-label="Chrome">
          <svg width="28" height="28" viewBox="0 0 28 28">
            <circle cx="14" cy="14" r="13.500" fill="#f3c62c" />
            <path d="M14 14L2.300 7.200A13.500 13.500 0 0 0 14 27.500L20 17.500z" fill="#2f9e4f" />
            <path d="M2.300 7.200A13.500 13.500 0 0 1 25.700 7.500H14L8 17z" fill="#d8402f" />
            <circle cx="14" cy="14" r="6.300" fill="#fff" />
            <circle cx="14" cy="14" r="4.900" fill="#3f7fe6" />
          </svg>
        </Task>
        <Task aria-label="Photoshop"><PsTile>Ps</PsTile></Task>
        <Task aria-label="Firefox">
          <svg width="30" height="30" viewBox="0 0 30 30">
            <path d="M4 6q2 1 3 3q4-3 8-2q1-5 5-7q0 4 4 7q5 4 5 10q-1 11-14 12Q2 28 1 16Q1 10 4 6z" fill="#f2662c" />
            <path d="M20 0q0 4 4 7q5 4 5 10q-1 8-9 11q6-6 4-13q-2-4-6-6q-1-5 2-9z" fill="#fcc62f" />
            <circle cx="15" cy="15.500" r="6" fill="#7a3fc4" />
            <path d="M4 12q5-3 10 0q-5 1-4 4q2 4 8 2q-3 6-9 4q-5-3-5-10z" fill="#f2453c" />
          </svg>
        </Task>
        <Task $open aria-label="Filmora">
          <svg width="28" height="28" viewBox="0 0 28 28">
            <rect width="28" height="28" rx="4" fill="#2c3642" />
            <path d="M8 9l5-4 4 4-5 5z" fill="#fff" />
            <path d="M8 18l9-7 5 4-9 9z" fill="#4aa19d" />
          </svg>
        </Task>
        <Task $open aria-label="Pro/ENGINEER">
          <svg width="26" height="24" viewBox="0 0 26 24">
            <path d="M1 4l3-3h21v18l-4 4H1z" fill="#12211f" />
            <path d="M1.500 4.500h20v18h-20z" fill="#62d6cf" stroke="#2f8a86" />
            <path d="M2 4l2-2.500h19L21 4z" fill="#f7fbfb" />
          </svg>
        </Task>
        <Tray>
          <Lang>EN</Lang>
          <svg width="10" height="6" aria-hidden="true"><path d="M1 5l4-4 4 4z" fill="#fff" /></svg>
          <svg width="18" height="16" viewBox="0 0 18 16" aria-hidden="true">
            <path d="M3 14v-3M6 14V9M9 14V6M12 14V3M15 14V1" stroke="#4a5566" strokeWidth="2" />
            <path d="M7 8l6 6M13 8l-6 6" stroke="#c8202c" strokeWidth="2.400" />
          </svg>
          <svg width="14" height="16" viewBox="0 0 14 16" aria-hidden="true"><path d="M2 6h3l4-4v12l-4-4H2z" fill="#fff" stroke="#4a5566" /></svg>
          <svg width="18" height="18" viewBox="0 0 18 18" aria-hidden="true">
            <path d="M2 10l5-3 3-5 2 1-1 3 4 2v8l-6 1-7-1z" fill="#f0a020" stroke="#9c5e10" />
            <path d="M8.500 9v4M8.500 14v2" stroke="#fff" strokeWidth="2" />
          </svg>
          <Clock>11:49 AM<br />1/11/2023</Clock>
          <ShowDesktop aria-label="Show desktop" />
        </Tray>
      </TaskBar>
    </Page>
  );
}
